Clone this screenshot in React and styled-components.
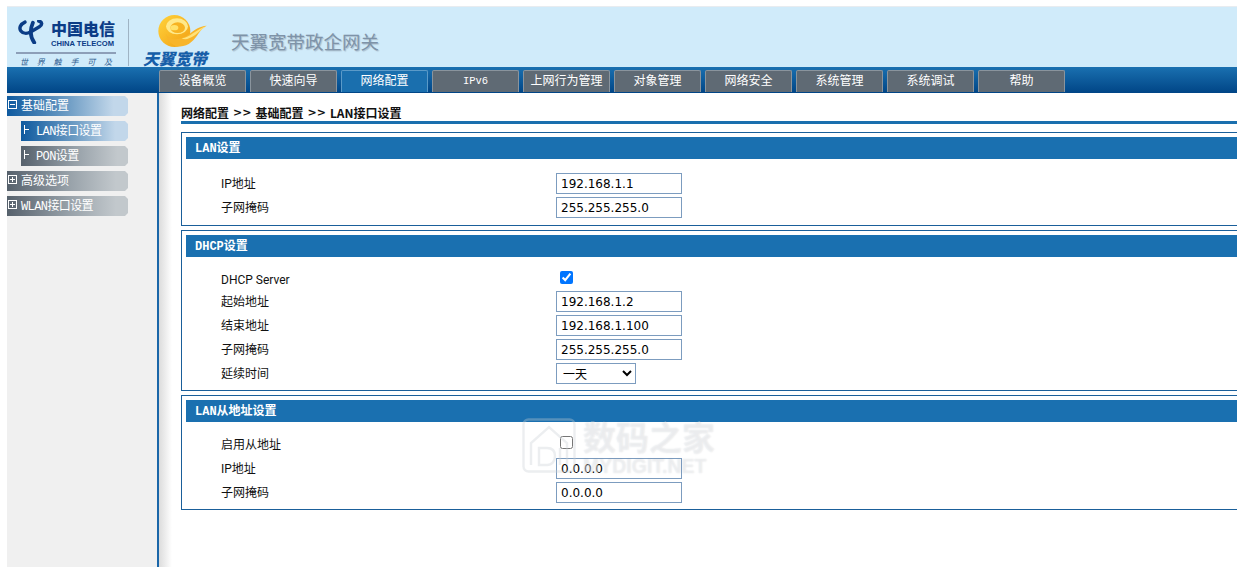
import styled, { createGlobalStyle } from 'styled-components';

const GlobalStyle = createGlobalStyle`
  html, body {
    margin: 0;
    padding: 0;
    background: #fff;
    overflow: hidden;
  }
  body {
    font-family: Roboto, "Noto Sans CJK SC", sans-serif;
    font-size: 12px;
    color: #111;
  }
`;

const Page = styled.div`
  position: relative;
  width: 1237px;
  height: 567px;
  padding: 6px 0 0 7px;
  box-sizing: border-box;
  overflow: hidden;
`;

const Header = styled.div`
  display: flex;
  align-items: stretch;
  height: 60px;
  border-top: 1px solid #e8ecf0;
  background: #d0ebfa;
  box-sizing: content-box;
`;

const TelecomLogo = styled.div`
  width: 122px;
  height: 47px;
  margin-top: 12px;
  padding: 0 0 0 9px;
  box-sizing: border-box;
  border-right: 1px solid #9fb4c4;
`;

const TelecomTop = styled.div`
  display: flex;
  align-items: flex-start;
  gap: 5px;
  height: 34px;
  margin-top: -1px;
`;

const TelecomNames = styled.div`
  display: flex;
  flex-direction: column;
  color: #0b3c86;
`;

const TelecomCn = styled.span`
  font-family: "Noto Sans CJK SC", sans-serif;
  font-size: 16px;
  font-weight: 900;
  line-height: 21px;
  white-space: nowrap;
`;

const TelecomEn = styled.span`
  font-family: "Liberation Sans", sans-serif;
  font-size: 7.6px;
  font-weight: 700;
  line-height: 9px;
  white-space: nowrap;
`;

const TelecomSlogan = styled.div`
  display: flex;
  justify-content: space-between;
  width: 100px;
  padding: 3px 4px 0;
  box-sizing: border-box;
  border-top: 2px solid #8d9fb8;
  font-family: "Noto Sans CJK SC", sans-serif;
  font-size: 8px;
  line-height: 10px;
  font-style: italic;
  color: #2c5a8e;
`;

const TianyiLogo = styled.div`
  width: 87px;
  padding: 6px 0 0 14px;
  box-sizing: border-box;
  display: flex;
  flex-direction: column;
  align-items: flex-start;
`;

const TianyiSwirl = styled.div`
  height: 37px;
  margin-left: 15px;
`;

const TianyiName = styled.span`
  font-family: "Noto Sans CJK SC", sans-serif;
  font-size: 16px;
  font-weight: 900;
  font-style: italic;
  line-height: 14px;
  margin-top: 1px;
  color: #165ea8;
  white-space: nowrap;
`;

const ProductTitle = styled.div`
  align-self: center;
  margin: 7px 0 0 15px;
  font-family: "Noto Sans CJK SC", sans-serif;
  font-size: 18.5px;
  color: #7e93a8;
  text-shadow: 1px 1px 1px #a9bccb;
  white-space: nowrap;
`;

const NavBar = styled.nav`
  display: flex;
  gap: 4px;
  height: 26px;
  padding: 3px 0 1px 152px;
  box-sizing: border-box;
  background: linear-gradient(#1a70b0, #004586);
`;

const NavTab = styled.div`
  width: 87px;
  height: 22px;
  flex: none;
  box-sizing: border-box;
  padding-bottom: ${(p) => (p.$mono ? '1px' : '4px')};
  display: flex;
  align-items: center;
  justify-content: center;
  background: ${(p) => (p.$active ? '#1a6fae' : '#5f6a74')};
  border: 1px solid ${(p) => (p.$active ? '#5b9ac8' : '#8a949d')};
  border-bottom: none;
  border-radius: 2px 2px 0 0;
  color: #fff;
  font-family: ${(p) => (p.$mono ? '"Liberation Mono", monospace' : '"Noto Sans CJK SC", sans-serif')};
  font-size: ${(p) => (p.$mono ? '10.5px' : '12px')};
  white-space: nowrap;
`;

const Body = styled.div`
  display: flex;
  height: 474px;
`;

const Sidebar = styled.aside`
  width: 150px;
  flex: none;
  box-sizing: border-box;
  padding-top: 3px;
  background: #f0f0f0;
  display: flex;
  flex-direction: column;
  gap: 5px;
`;

const MenuItem = styled.div`
  width: ${(p) => (p.$sub ? '107px' : '121px')};
  height: 20px;
  margin-left: ${(p) => (p.$sub ? '14px' : '0')};
  padding: 0 0 3px ${(p) => (p.$sub ? '2px' : '0')};
  box-sizing: border-box;
  display: flex;
  align-items: center;
  gap: ${(p) => (p.$sub ? '6px' : '3px')};
  color: #fff;
  font-family: "Noto Sans CJK SC", sans-serif;
  font-size: 12px;
  white-space: nowrap;
  background: ${(p) =>
    p.$active
      ? 'linear-gradient(90deg, #0f5a9f 0%, #6d9cc4 50%, #c2d7ea 88%)'
      : 'linear-gradient(90deg, #56616c 0%, #96a0a8 50%, #c2c8cc 90%)'};
  clip-path: polygon(0 0, calc(100% - 3px) 0, 100% 3px, 100% calc(100% - 3px), calc(100% - 3px) 100%, 0 100%);
`;

const MonoText = styled.span`
  font-family: "Liberation Mono", "Noto Sans CJK SC", monospace;
  font-size: 12px;
  letter-spacing: -0.6px;
`;

const Shadow = styled.div`
  width: 15px;
  flex: none;
  box-sizing: border-box;
  border-left: 2px solid #1a66a8;
  background: linear-gradient(90deg, #dcdcdc, #fff);
`;

const Content = styled.main`
  flex: none;
  width: 1100px;
  padding: 12px 0 0 9px;
  box-sizing: border-box;
`;

const Breadcrumb = styled.div`
  display: flex;
  align-items: center;
  height: 15px;
  padding-bottom: 1px;
  border-bottom: 3px solid #1a6fae;
  font-family: "Noto Sans CJK SC", sans-serif;
  font-weight: 700;
  font-size: 12px;
  color: #111;
  white-space: nowrap;
  margin-bottom: 8px;
  box-sizing: content-box;
`;

const BreadcrumbSep = styled.span`
  font-family: "DejaVu Sans", sans-serif;
  font-size: 11px;
  margin: 0 4px;
`;

const Section = styled.section`
  border: 1px solid #1a5f9a;
  padding: 4px 4px ${(p) => p.$bottom}px;
  margin-bottom: 4px;
`;

const SectionTitle = styled.div`
  height: 22px;
  line-height: 25px;
  overflow: hidden;
  background: #1a70b0;
  color: #fff;
  padding-left: 9px;
  font-family: "Liberation Mono", "Noto Sans CJK SC", monospace;
  font-size: 12px;
  font-weight: 700;
  margin-bottom: ${(p) => p.$gap}px;
`;

const Row = styled.div`
  display: grid;
  grid-template-columns: 335px auto;
  justify-content: start;
  align-items: start;
  height: ${(p) => p.$height || 24}px;
  padding-left: 35px;
`;

const Label = styled.label`
  white-space: nowrap;
  font-size: 12px;
  line-height: 22px;
  padding-top: ${(p) => p.$top || 0}px;
`;

const TextInput = styled.input`
  width: 126px;
  height: 21px;
  box-sizing: border-box;
  padding: 0 4px;
  border: 1px solid #7c9cbf;
  font-family: "DejaVu Sans", sans-serif;
  font-size: 12px;
  color: #000;
  background: #fff;
  outline: none;
`;

const Check = styled.input`
  width: 13px;
  height: 13px;
  margin: 4px 0 0 4px;
`;

const Select = styled.select`
  width: 80px;
  height: 21px;
  box-sizing: border-box;
  padding: 0 0 0 2px;
  border: 1px solid #7c9cbf;
  border-radius: 0;
  background: #fff;
  font-family: "Noto Sans CJK SC", sans-serif;
  font-size: 12px;
  color: #000;
`;

const Watermark = styled.div`
  position: absolute;
  left: 522px;
  top: 418px;
  display: flex;
  gap: 7px;
  pointer-events: none;
`;

const WatermarkText = styled.div`
  display: flex;
  flex-direction: column;
  color: rgba(255, 255, 255, 0.4);
  text-shadow: 0 0 1.5px rgba(110, 120, 130, 0.22);
`;

const WatermarkCn = styled.span`
  font-family: "Noto Sans CJK SC", sans-serif;
  font-size: 33px;
  font-weight: 700;
  line-height: 36px;
`;

const WatermarkEn = styled.span`
  font-family: "Liberation Sans", sans-serif;
  font-size: 19.5px;
  line-height: 20px;
  font-weight: 700;
  margin-top: 2px;
`;

const TelecomMark = () => (
  <svg width="30" height="24" viewBox="0 0 75 70" style={{ marginTop: 2 }}>
    <g fill="none" stroke="#0b3c86" strokeLinecap="round" strokeLinejoin="round">
      <path d="M20 6 C6 12 2 24 8 32 C14 40 26 40 36 35 L62 20 C72 14 70 5 60 3" strokeWidth="10" />
      <path d="M43 8 C36 24 33 46 47 66" strokeWidth="11" />
    </g>
  </svg>
);

const TianyiMark = () => (
  <svg width="49" height="36" viewBox="0 0 145 108">
    <defs>
      <linearGradient id="gold" x1="0" y1="0" x2="1" y2="1">
        <stop offset="0" stopColor="#ffd33c" />
        <stop offset="1" stopColor="#f29f12" />
      </linearGradient>
    </defs>
    <circle cx="48" cy="54" r="48" fill="url(#gold)" />
    <ellipse cx="56" cy="40" rx="33" ry="24" fill="#ffe98a" />
    <ellipse cx="58" cy="44" rx="22" ry="16" fill="#f7b322" />
    <ellipse cx="48" cy="44" rx="12" ry="8" fill="#ffe26b" />
    <path d="M22 62 C34 86 70 82 92 64 C108 50 124 40 145 38 C124 48 118 72 98 88 C78 106 36 110 22 62 Z" fill="#f8b52a" />
    <path d="M70 76 C96 72 112 50 145 38 C126 52 112 68 92 76 C84 80 76 79 70 76 Z" fill="#ffe27a" />
  </svg>
);

const TreeBox = ({ open }) => (
  <svg width="11" height="11" viewBox="0 0 11 11">
    <rect x="1.5" y="1.5" width="8" height="8" fill="none" stroke="#fff" />
    <path d={open ? 'M3 5.5H8' : 'M3 5.5H8M5.5 3V8'} stroke="#fff" />
  </svg>
);

const TreeBranch = () => (
  <svg width="7" height="11" viewBox="0 0 7 11">
    <path d="M1.5 1V10M1.5 5.5H6" stroke="#fff" fill="none" />
  </svg>
);

const HouseMark = () => (
  <svg width="54" height="55" viewBox="0 0 54 55">
    <g fill="none" stroke="rgba(200,205,212,0.35)" strokeWidth="2.4">
      <rect x="1.5" y="1.5" width="51" height="52" rx="5" />
      <path d="M9 47V25L27 9L45 25V47" />
      <path d="M17 30H25C31 30 33 34 33 38C33 43 30 47 25 47H17Z" />
      <path d="M38 30V47" />
    </g>
  </svg>
);

const tabs = ['设备概览', '快速向导', '网络配置', 'IPv6', '上网行为管理', '对象管理', '网络安全', '系统管理', '系统调试', '帮助'];

const FieldRow = ({ label, value }) => (
  <Row>
    <Label>{label}</Label>
    <TextInput defaultValue={value} />
  </Row>
);

const App = () => (
  <Page>
    <GlobalStyle />
    <Header>
      <TelecomLogo>
        <TelecomTop>
          <TelecomMark />
          <TelecomNames>
            <TelecomCn>中国电信</TelecomCn>
            <TelecomEn>CHINA TELECOM</TelecomEn>
          </TelecomNames>
        </TelecomTop>
        <TelecomSlogan>
          <span>世</span>
          <span>界</span>
          <span>触</span>
          <span>手</span>
          <span>可</span>
          <span>及</span>
        </TelecomSlogan>
      </TelecomLogo>
      <TianyiLogo>
        <TianyiSwirl>
          <TianyiMark />
        </TianyiSwirl>
        <TianyiName>天翼宽带</TianyiName>
      </TianyiLogo>
      <ProductTitle>天翼宽带政企网关</ProductTitle>
    </Header>
    <NavBar>
      {tabs.map((tab) => (
        <NavTab key={tab} $active={tab === '网络配置'} $mono={tab === 'IPv6'}>
          {tab}
        </NavTab>
      ))}
    </NavBar>
    <Body>
      <Sidebar>
        <MenuItem $active>
          <TreeBox open />
          基础配置
        </MenuItem>
        <MenuItem $sub $active>
          <TreeBranch />
          <MonoText>LAN接口设置</MonoText>
        </MenuItem>
        <MenuItem $sub>
          <TreeBranch />
          <MonoText>PON设置</MonoText>
        </MenuItem>
        <MenuItem>
          <TreeBox />
          高级选项
        </MenuItem>
        <MenuItem>
          <TreeBox />
          <MonoText>WLAN接口设置</MonoText>
        </MenuItem>
      </Sidebar>
      <Shadow />
      <Content>
        <Breadcrumb>
          网络配置<BreadcrumbSep>&gt;&gt;</BreadcrumbSep>基础配置<BreadcrumbSep>&gt;&gt;</BreadcrumbSep>LAN接口设置
        </Breadcrumb>
        <Section $bottom={4}>
          <SectionTitle $gap={14}>LAN设置</SectionTitle>
          <FieldRow label="IP地址" value="192.168.1.1" />
          <FieldRow label="子网掩码" value="255.255.255.0" />
        </Section>
        <Section $bottom={3}>
          <SectionTitle $gap={10}>DHCP设置</SectionTitle>
          <Row>
            <Label $top={2}>DHCP Server</Label>
            <Check type="checkbox" defaultChecked />
          </Row>
          <FieldRow label="起始地址" value="192.168.1.2" />
          <FieldRow label="结束地址" value="192.168.1.100" />
          <FieldRow label="子网掩码" value="255.255.255.0" />
          <Row>
            <Label>延续时间</Label>
            <Select defaultValue="一天">
              <option>一天</option>
            </Select>
          </Row>
        </Section>
        <Section $bottom={3}>
          <SectionTitle $gap={10}>LAN从地址设置</SectionTitle>
          <Row $height={26}>
            <Label $top={2}>启用从地址</Label>
            <Check type="checkbox" />
          </Row>
          <FieldRow label="IP地址" value="0.0.0.0" />
          <FieldRow label="子网掩码" value="0.0.0.0" />
        </Section>
      </Content>
    </Body>
    <Watermark>
      <HouseMark />
      <WatermarkText>
        <WatermarkCn>数码之家</WatermarkCn>
        <WatermarkEn>MYDIGIT.NET</WatermarkEn>
      </WatermarkText>
    </Watermark>
  </Page>
);

export default App;
